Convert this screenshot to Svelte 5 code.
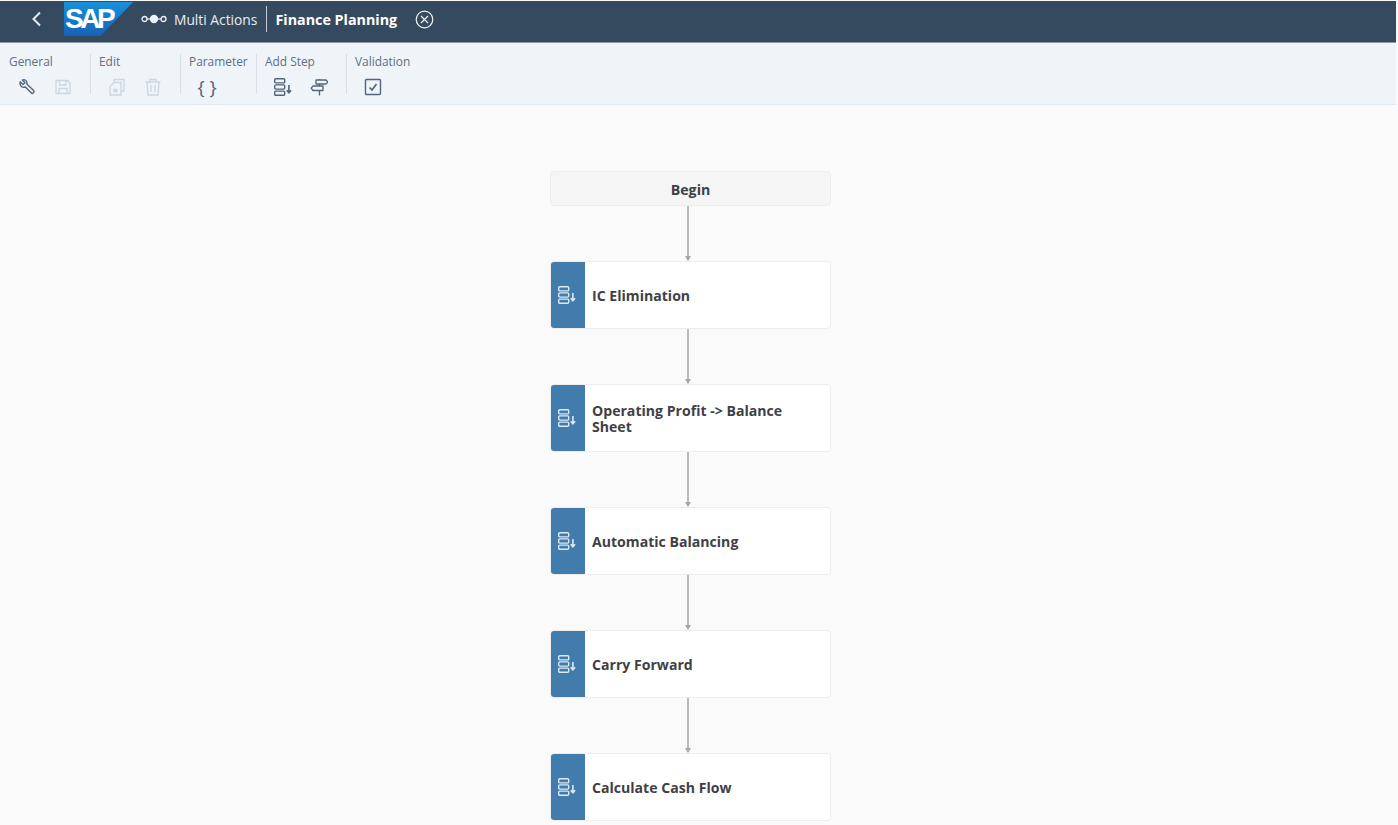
<script>
  // Multi action editor: shell bar, toolbar groups and the step flow.
  const groups = [
    { label: 'General', width: 81, icons: ['wrench', 'save'] },
    { label: 'Edit', width: 81, icons: ['copy', 'trash'] },
    { label: 'Parameter', width: 67, icons: ['braces'] },
    { label: 'Add Step', width: 81, icons: ['step', 'sign'] },
    { label: 'Validation', width: 70, icons: ['check'] }
  ];
  const muted = ['save', 'copy', 'trash'];
  const steps = [
    'IC Elimination',
    'Operating Profit -> Balance Sheet',
    'Automatic Balancing',
    'Carry Forward',
    'Calculate Cash Flow'
  ];
</script>

{#snippet stepIcon()}
  <svg width="18" height="18" viewBox="0 0 18 18" fill="none" stroke="currentColor" stroke-width="1.4">
    <rect x="0.700" y="0.700" width="10" height="4.200" rx="1" />
    <rect x="0.700" y="6.900" width="10" height="4.200" rx="1" />
    <rect x="0.700" y="13.100" width="10" height="4.200" rx="1" />
    <path d="M14.900 7v7.500M12.700 12.200l2.200 2.500 2.200-2.500" stroke-width="1.600" />
  </svg>
{/snippet}

{#snippet toolIcon(name)}
  {#if name === 'wrench'}
    <svg width="18" height="18" viewBox="0 0 18 18" fill="none" stroke="currentColor" stroke-width="1.400" stroke-linejoin="round">
      <path d="M2.200 3.800 5 6.500l2-1.700-2.700-2.700C6.500 1 9.300 2.500 9 5.300v1l6.700 6.200c1.100 1.200-.7 3.500-2 2.800L7.300 9 6 9.300C3.200 9.700 1.200 6.500 2.200 3.800z" />
    </svg>
  {:else if name === 'save'}
    <svg width="18" height="18" viewBox="0 0 18 18" fill="none" stroke="currentColor" stroke-width="1.300">
      <path d="M2 2.500h11.500l2.500 2.500v10.500H2z" />
      <path d="M5.500 2.500v4.500h6.500V2.500M5 15.500v-5h8v5" />
    </svg>
  {:else if name === 'copy'}
    <svg width="18" height="18" viewBox="0 0 18 18" fill="none" stroke="currentColor" stroke-width="1.300">
      <path d="M6 4.500V1.500h10v11.500h-3" />
      <path d="M6 4.500h7v12.500H2V8.500z" />
      <path d="M6 11.500h3v2H6z" />
    </svg>
  {:else if name === 'trash'}
    <svg width="18" height="18" viewBox="0 0 18 18" fill="none" stroke="currentColor" stroke-width="1.300">
      <path d="M1.500 4h15M6 4V1.500h6V4M3 4l1 13h10l1-13M7 7v7M11 7v7" />
    </svg>
  {:else if name === 'braces'}
    <span class="braces">{'{ }'}</span>
  {:else if name === 'step'}
    {@render stepIcon()}
  {:else if name === 'sign'}
    <svg width="18" height="18" viewBox="0 0 18 18" fill="none" stroke="currentColor" stroke-width="1.300" stroke-linejoin="round">
      <path d="M6 2h10l1.800 2-1.800 2H6zM13 8H3l-1.800 2.200L3 12.500h10zM9.500 1v1M9.500 6v2M9.500 12.500v5" />
    </svg>
  {:else}
    <svg width="18" height="18" viewBox="0 0 18 18" fill="none" stroke="currentColor" stroke-width="1.400">
      <rect x="1.500" y="1.500" width="15" height="15" rx="1" />
      <path d="m5.500 9.500 2.500 2.500 4.500-6" stroke-width="1.700" />
    </svg>
  {/if}
{/snippet}

<div class="page">
  <header class="shell">
    <svg class="back" width="11" height="16" viewBox="0 0 11 16" fill="none" stroke="currentColor" stroke-width="2">
      <path d="M9 1.500 2.500 8 9 14.500" />
    </svg>
    <div class="logo"><span>SAP</span></div>
    <svg class="app-icon" width="26" height="10" viewBox="0 0 26 10" fill="none" stroke="currentColor" stroke-width="1.300">
      <circle cx="3.500" cy="5" r="2.500" />
      <path d="M6 5h14" />
      <circle cx="13" cy="5" r="3.500" fill="currentColor" />
      <circle cx="22.500" cy="5" r="2.500" />
    </svg>
    <span class="app">Multi Actions</span>
    <span class="divider"></span>
    <span class="title">Finance Planning</span>
    <svg class="close" width="19" height="19" viewBox="0 0 19 19" fill="none" stroke="currentColor" stroke-width="1.200">
      <circle cx="9.500" cy="9.500" r="8.300" />
      <path d="m6 6 7 7M13 6l-7 7" />
    </svg>
  </header>

  <div class="toolbar">
    {#each groups as g, i (g.label)}
      {#if i > 0}<span class="sep"></span>{/if}
      <div class="group" style="width: {g.width}px">
        <span class="label">{g.label}</span>
        <div class="icons">
          {#each g.icons as name (name)}
            <span class="tool" class:muted={muted.includes(name)}>{@render toolIcon(name)}</span>
          {/each}
        </div>
      </div>
    {/each}
  </div>

  <main class="canvas">
    <div class="flow">
      <div class="begin"><span>Begin</span></div>
      {#each steps as step (step)}
        <div class="link"><span class="line"></span><span class="head"></span></div>
        <div class="step">
          <div class="badge">{@render stepIcon()}</div>
          <div class="name">{step}</div>
        </div>
      {/each}
    </div>
  </main>
</div>

<style>
  :global(body) {
    margin: 0;
    overflow: hidden;
  }
  .page {
    width: 1398px;
    height: 825px;
    display: flex;
    flex-direction: column;
    overflow: hidden;
    font-family: "Open Sans", "Liberation Sans", sans-serif;
    background: #fafafa;
  }
  .shell {
    height: 42px;
    box-sizing: border-box;
    padding-bottom: 5px;
    margin-top: 1px;
    margin-right: 2px;
    flex: none;
    display: flex;
    align-items: center;
    background: #354a5f;
    border-bottom: 1px solid #8c9bab;
    color: #fff;
  }
  .back {
    margin-left: 31px;
    color: #e4ebf3;
  }
  .logo {
    width: 69px;
    height: 34px;
    margin-left: 22px;
    background: linear-gradient(#1a90da, #1562b8);
    clip-path: polygon(0 0, 100% 0, 53% 100%, 0 100%);
    display: flex;
    align-items: center;
  }
  .logo span {
    margin-left: 1px;
    font-family: "Liberation Sans", sans-serif;
    font-size: 28px;
    font-weight: 700;
    letter-spacing: -3.500px;
    color: #fff;
  }
  .app-icon {
    margin-left: 8px;
    color: #eef2f6;
  }
  .app {
    margin-left: 7px;
    font-size: 13.800px;
    color: #e8edf2;
    white-space: nowrap;
  }
  .divider {
    width: 1px;
    height: 26px;
    margin: 0 8px 0 9px;
    background: #c5ced7;
  }
  .title {
    font-size: 14.300px;
    font-weight: 700;
    white-space: nowrap;
  }
  .close {
    margin-left: 18px;
    color: #eef2f6;
  }
  .toolbar {
    height: 62px;
    margin-right: 2px;
    flex: none;
    display: flex;
    align-items: flex-start;
    padding-left: 9px;
    box-sizing: border-box;
    background: #eff4f9;
    border-bottom: 1px solid #dfe8f2;
  }
  .sep {
    width: 1px;
    height: 40px;
    margin-top: 11px;
    margin-right: 8px;
    background: #d9dfe5;
    flex: none;
  }
  .group {
    flex: none;
    padding-top: 10px;
    display: flex;
    flex-direction: column;
    color: #5d6f82;
  }
  .label {
    font-size: 11.900px;
    line-height: 16px;
    white-space: nowrap;
  }
  .icons {
    display: flex;
    gap: 18px;
    margin-top: 9px;
    margin-left: 9px;
    color: #51657a;
  }
  .tool {
    width: 18px;
    height: 18px;
    display: flex;
    align-items: center;
    justify-content: center;
  }
  .tool.muted {
    color: #ccd6df;
  }
  .braces {
    font-size: 19px;
    line-height: 18px;
    white-space: nowrap;
  }
  .canvas {
    flex: 1;
    min-height: 0;
    padding: 66px 0 0 550px;
    background: #fafafa;
  }
  .flow {
    width: 281px;
    display: flex;
    flex-direction: column;
  }
  .begin {
    height: 35px;
    box-sizing: border-box;
    padding-top: 2px;
    display: flex;
    align-items: center;
    justify-content: center;
    background: #f5f5f5;
    border: 1px solid #ededed;
    border-radius: 4px;
    font-size: 14.200px;
    font-weight: 700;
    color: #3f3f46;
  }
  .link {
    height: 55px;
    display: flex;
    flex-direction: column;
    align-items: center;
    padding-right: 5px;
    box-sizing: border-box;
  }
  .line {
    flex: 1;
    width: 2px;
    background: #b9b9b9;
  }
  .head {
    width: 0;
    height: 0;
    border-left: 3px solid transparent;
    border-right: 3px solid transparent;
    border-top: 5px solid #a5a5a5;
  }
  .step {
    height: 68px;
    box-sizing: border-box;
    display: flex;
    background: #fff;
    border: 1px solid #ededed;
    border-radius: 4px;
    overflow: hidden;
  }
  .badge {
    width: 34px;
    box-sizing: border-box;
    padding-right: 3px;
    flex: none;
    display: flex;
    align-items: center;
    justify-content: center;
    background: #427cac;
    color: #dce8f2;
  }
  .name {
    flex: 1;
    align-self: center;
    padding: 2px 30px 0 7px;
    font-size: 14.100px;
    line-height: 16px;
    font-weight: 700;
    color: #3f3f46;
  }
</style>
